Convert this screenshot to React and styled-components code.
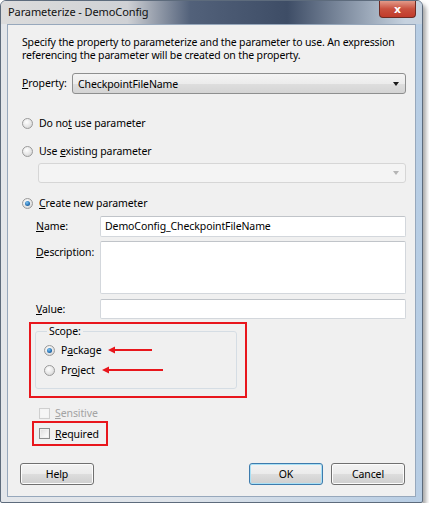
import React from 'react'
import styled, { createGlobalStyle } from 'styled-components'

const GlobalStyle = createGlobalStyle`
  html, body {
    margin: 0;
    padding: 0;
    background: #ffffff;
  }
  body {
    font-family: "Noto Sans", "Open Sans", sans-serif;
    font-size: 10px;
    color: #000;
  }
  u { text-decoration-thickness: 1px; text-underline-offset: 1px; }
`

const RED = '#e8161c'
const titleGradient = 'linear-gradient(90deg, #dcdcdc 0%, #cfd1d5 30%, #52617a 45%, #3e4d66 68%, #c6d2df 96%)'
const closeGradient = 'linear-gradient(180deg, #e39a89 0%, #c9503e 50%, #c13b2b 100%)'

/* Window frame */
const Window = styled.div`
  width: 423px;
  height: 503px;
  display: flex;
  flex-direction: column;
  box-sizing: border-box;
  border: 1px solid #5d6b7c;
  border-radius: 6px 6px 2px 2px;
  background: ${p => p.bg};
  box-shadow: 3px 4px 4px rgba(0, 0, 0, 0.35);
  overflow: hidden;
`

const TitleBar = styled.div`
  height: 23px;
  flex: none;
  display: flex;
  align-items: flex-start;
  justify-content: space-between;
  padding-left: 7px;
  background: ${p => p.bg};
`

const Title = styled.div`
  font-size: 11px;
  line-height: 22px;
  letter-spacing: -0.1px;
  color: #111;
`

const CloseButton = styled.div`
  width: 37px;
  height: 17px;
  margin-right: 6px;
  box-sizing: border-box;
  border: 1px solid #6e2a22;
  border-top: none;
  border-radius: 0 0 4px 4px;
  background: ${p => p.bg};
  display: flex;
  align-items: center;
  justify-content: center;
  color: #fff;
  font-family: "DejaVu Sans", sans-serif;
  font-weight: bold;
  font-size: 11px;
`

const Client = styled.div`
  flex: 1;
  margin: 0 6px 5px 6px;
  border: 1px solid #97a8bc;
  background: #f0f0f0;
  padding: 11px 9px 0 14px;
  display: flex;
  flex-direction: column;
`

/* Content */
const Intro = styled.p`
  margin: 0;
  font-size: 10.5px;
  line-height: 13px;
  letter-spacing: -0.15px;
`

const Row = styled.div`
  display: flex;
  align-items: center;
  height: ${p => p.h || 16}px;
  margin-top: ${p => p.mt || 0}px;
  margin-left: ${p => p.ml || 0}px;
`

const FieldRow = styled.div`
  display: flex;
  align-items: flex-start;
  height: ${p => p.h}px;
  margin-top: ${p => p.mt}px;
  margin-left: ${p => p.ml || 0}px;
`

const Label = styled.div`
  width: ${p => p.w}px;
  flex: none;
  line-height: ${p => p.lh || 20}px;
  font-size: 10.5px;
  letter-spacing: -0.1px;
`

const Combo = styled.div`
  flex: 1;
  height: 100%;
  box-sizing: border-box;
  border: 1px solid ${p => (p.disabled ? '#d6d6d6' : '#8e8f8f')};
  border-radius: 3px;
  background: ${p => (p.disabled
    ? '#f4f4f4'
    : 'linear-gradient(180deg, #f4f4f4 0%, #ececec 50%, #dedede 51%, #d4d4d4 100%)')};
  display: flex;
  align-items: center;
  justify-content: space-between;
  padding: 0 6px 0 5px;
  font-size: 10.5px;
  letter-spacing: -0.1px;
`

const Arrow = styled.span`
  width: 0;
  height: 0;
  border-left: 3.5px solid transparent;
  border-right: 3.5px solid transparent;
  border-top: 4px solid ${p => (p.disabled ? '#b5b5b5' : '#1a1a1a')};
`

const TextBox = styled.div`
  flex: 1;
  height: 100%;
  box-sizing: border-box;
  background: #fff;
  border: 1px solid #d3d7dc;
  border-top-color: #c0c4c9;
  border-radius: 2px;
  padding: 0 4px;
  line-height: 18px;
  font-size: 10.5px;
  letter-spacing: -0.1px;
`

const RadioDot = styled.span`
  width: 11px;
  height: 11px;
  flex: none;
  box-sizing: border-box;
  border-radius: 50%;
  border: 1px solid #9a9a9a;
  background: radial-gradient(circle at 40% 35%, #ffffff 0%, #e6e6e6 55%, #c8c8c8 100%);
  display: flex;
  align-items: center;
  justify-content: center;
  margin-right: 6px;

  &::after {
    content: '';
    display: ${p => (p.checked ? 'block' : 'none')};
    width: 5px;
    height: 5px;
    border-radius: 50%;
    background: radial-gradient(circle at 40% 35%, #7fc4f2 0%, #2a76b8 55%, #0e3f73 100%);
  }
`

const Box = styled.span`
  width: 11px;
  height: 11px;
  flex: none;
  box-sizing: border-box;
  border: 1px solid ${p => (p.disabled ? '#cfcfcf' : '#8e8f8f')};
  background: ${p => (p.disabled
    ? '#f6f6f6'
    : 'linear-gradient(135deg, #dcdcdc 0%, #f3f3f3 60%, #ffffff 100%)')};
  box-shadow: inset 0 0 0 1px ${p => (p.disabled ? '#f4f4f4' : '#f0f0f0')};
  margin-right: 5px;
`

const OptionText = styled.span`
  font-size: 10.5px;
  letter-spacing: -0.1px;
  color: ${p => (p.disabled ? '#a3a3a3' : '#000')};
`

const RedBox = styled.div`
  width: ${p => p.w}px;
  height: ${p => p.h}px;
  margin-top: ${p => p.mt}px;
  margin-left: ${p => p.ml}px;
  box-sizing: border-box;
  border: 2px solid ${RED};
  padding: ${p => p.pad};
  display: flex;
  flex-direction: column;
`

const Group = styled.fieldset`
  margin: 0;
  width: 202px;
  height: 64px;
  box-sizing: border-box;
  border: 1px solid #d5dde4;
  border-radius: 3px;
  padding: 5px 0 0 8px;
  display: flex;
  flex-direction: column;
  gap: 4px;
`

const Legend = styled.legend`
  padding: 0 2px;
  margin-left: 3px;
  font-size: 10.5px;
  line-height: 12px;
  letter-spacing: -0.1px;
`

const ArrowSvg = styled.svg`
  margin-left: 7px;
  flex: none;
`

const ButtonRow = styled.div`
  display: flex;
  height: 22px;
  margin-top: 17px;
  margin-left: -2px;
  margin-right: 1px;
  gap: 8px;
`

const Button = styled.div`
  width: 74px;
  height: 22px;
  box-sizing: border-box;
  border: 1px solid ${p => (p.primary ? '#3d7bad' : '#707070')};
  border-radius: 3px;
  background: linear-gradient(180deg, #f3f3f3 0%, #ebebeb 49%, #dddddd 50%, #cfcfcf 100%);
  box-shadow: inset 0 0 0 1px ${p => (p.primary ? '#a9e0f5' : '#fcfcfc')};
  display: flex;
  align-items: center;
  justify-content: center;
  font-size: 10.5px;
  letter-spacing: -0.1px;
  margin-left: ${p => (p.push ? 'auto' : '0')};
`

const RedArrow = ({ width }) => (
  <ArrowSvg width={width} height="8" viewBox={`0 0 ${width} 8`}>
    <line x1="5" y1="4" x2={width} y2="4" stroke={RED} strokeWidth="2" />
    <polygon points="0,4 7,0.5 7,7.5" fill={RED} />
  </ArrowSvg>
)

export default function App() {
  return (
    <>
      <GlobalStyle />
      <Window bg="linear-gradient(90deg, #e3e6ea 0%, #dfe4ea 40%, #c9d7e6 75%, #b7cde4 100%)">
        <TitleBar bg={titleGradient}>
          <Title>Parameterize - DemoConfig</Title>
          <CloseButton bg={closeGradient}>x</CloseButton>
        </TitleBar>
        <Client>
          <Intro>
            Specify the property to parameterize and the parameter to use. An expression
            <br />
            referencing the parameter will be created on the property.
          </Intro>

          <FieldRow h={21} mt={11}>
            <Label w={50} lh={21}><u>P</u>roperty:</Label>
            <Combo>
              CheckpointFileName
              <Arrow />
            </Combo>
          </FieldRow>

          <Row mt={21}>
            <RadioDot />
            <OptionText>Do no<u>t</u> use parameter</OptionText>
          </Row>

          <Row mt={12}>
            <RadioDot />
            <OptionText>Use <u>e</u>xisting parameter</OptionText>
          </Row>

          <FieldRow h={20} mt={4} ml={16}>
            <Combo disabled>
              <span />
              <Arrow disabled />
            </Combo>
          </FieldRow>

          <Row mt={12}>
            <RadioDot checked />
            <OptionText><u>C</u>reate new parameter</OptionText>
          </Row>

          <FieldRow h={21} mt={5} ml={14}>
            <Label w={64} lh={21}><u>N</u>ame:</Label>
            <TextBox>DemoConfig_CheckpointFileName</TextBox>
          </FieldRow>

          <FieldRow h={53} mt={4} ml={14}>
            <Label w={64} lh={22}><u>D</u>escription:</Label>
            <TextBox />
          </FieldRow>

          <FieldRow h={20} mt={5} ml={14}>
            <Label w={64} lh={20}><u>V</u>alue:</Label>
            <TextBox />
          </FieldRow>

          <RedBox w={218} h={76} mt={3} ml={7} pad="1px 8px 0 4px">
            <Group>
              <Legend>Scope:</Legend>
              <Row>
                <RadioDot checked />
                <OptionText>P<u>a</u>ckage</OptionText>
                <RedArrow width={44} />
              </Row>
              <Row>
                <RadioDot />
                <OptionText>Pr<u>o</u>ject</OptionText>
                <RedArrow width={61} />
              </Row>
            </Group>
          </RedBox>

          <Row h={14} mt={8} ml={17}>
            <Box disabled />
            <OptionText disabled><u>S</u>ensitive</OptionText>
          </Row>

          <RedBox w={76} h={25} mt={1} ml={10} pad="0 0 0 5px">
            <Row h={21}>
              <Box />
              <OptionText><u>R</u>equired</OptionText>
            </Row>
          </RedBox>

          <ButtonRow>
            <Button>Help</Button>
            <Button primary push>OK</Button>
            <Button>Cancel</Button>
          </ButtonRow>
        </Client>
      </Window>
    </>
  )
}
